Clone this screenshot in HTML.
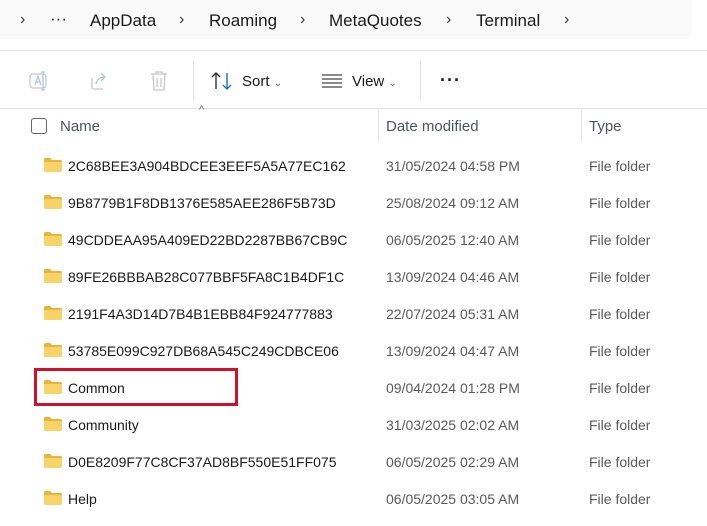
<!DOCTYPE html>
<html><head><style>
body{margin:0;width:707px;height:526px;overflow:hidden;background:#fff;font-family:"Liberation Sans",sans-serif;position:relative}
.abs{position:absolute}
.addr{left:0;top:0;width:691px;height:39px;background:#f9f9f9;border-radius:0 0 6px 0}
.bc{top:11px;font-size:17px;color:#1a1a1a}
.chev{top:11px;font-size:16px;color:#333}
.tb{top:73px;font-size:15px;color:#1a1a1a}
.hdr{top:118px;font-size:15px;color:#4a5666}
.row{position:absolute;left:0;width:707px;height:37px;font-size:14px;color:#1a1a1a}
.row span{position:absolute;top:12px}
.folder{position:absolute;left:44px;top:12px;width:18px;height:14px}
</style></head><body>
<div class="abs addr"></div>
<div class="abs" style="left:0;top:50px;width:707px;height:1px;background:#e3e3e3"></div>
<div class="abs chev" style="left:20px">›</div>
<div class="abs bc" style="left:50px;top:9px">···</div>
<div class="abs bc" style="left:90px">AppData</div>
<div class="abs chev" style="left:179px">›</div>
<div class="abs bc" style="left:209px">Roaming</div>
<div class="abs chev" style="left:300px">›</div>
<div class="abs bc" style="left:329px">MetaQuotes</div>
<div class="abs chev" style="left:446px">›</div>
<div class="abs bc" style="left:476px">Terminal</div>
<div class="abs chev" style="left:564px">›</div>
<svg class="abs" style="left:28px;top:70px" width="22" height="22" viewBox="0 0 22 22" fill="none" stroke="#a8c8e8" stroke-width="1.3"><rect x="2" y="4" width="16" height="14" rx="3" stroke="#c8c8c8"/><path d="M7 15l3-9 3 9M8 12h4"/><path d="M15 2v18M13 2h4M13 20h4"/></svg>
<svg class="abs" style="left:88px;top:70px" width="22" height="22" viewBox="0 0 22 22" fill="none" stroke-width="1.3"><path d="M4 8v9a2 2 0 002 2h9" stroke="#c8c8c8"/><path d="M8 14c1-5 4-7 9-7M13 3l4 4-4 4" stroke="#a8c8e8"/></svg>
<svg class="abs" style="left:148px;top:69px" width="22" height="24" viewBox="0 0 22 24" fill="none" stroke="#c8c8c8" stroke-width="1.3"><path d="M3 5h16M8 5V3h6v2M5 5l1 16h10l1-16M9 9v9M13 9v9"/></svg>
<div class="abs" style="left:193px;top:61px;width:1px;height:39px;background:#e3e3e3"></div>
<svg class="abs" style="left:210px;top:71px" width="24" height="20" viewBox="0 0 24 20" fill="none" stroke-width="1.4"><path d="M6 18V2M2 6l4-4 4 4" stroke="#333"/><path d="M17 2v16M13 14l4 4 4-4" stroke="#1a6fc4"/></svg>
<div class="abs tb" style="left:242px">Sort <span style="font-size:10px;color:#666">⌄</span></div>
<svg class="abs" style="left:321px;top:73px" width="22" height="16" viewBox="0 0 22 16" stroke="#444" stroke-width="1.2"><path d="M1 2h20M1 6h20M1 10h20M1 14h20"/></svg>
<div class="abs tb" style="left:352px">View <span style="font-size:10px;color:#666">⌄</span></div>
<div class="abs" style="left:420px;top:61px;width:1px;height:39px;background:#e3e3e3"></div>
<div class="abs tb" style="left:440px;top:70px;font-size:18px;font-weight:bold;letter-spacing:1px">···</div>
<div class="abs" style="left:0;top:108px;width:707px;height:1px;background:#e3e3e3"></div>
<div class="abs" style="left:199px;top:104px;font-size:11px;color:#666">^</div>
<div class="abs" style="left:31px;top:118px;width:14px;height:14px;border:1px solid #666;border-radius:3px"></div>
<div class="abs hdr" style="left:60px">Name</div>
<div class="abs" style="left:378px;top:108px;width:1px;height:33px;background:#e8e8e8"></div>
<div class="abs hdr" style="left:386px">Date modified</div>
<div class="abs" style="left:581px;top:108px;width:1px;height:33px;background:#e8e8e8"></div>
<div class="abs hdr" style="left:589px">Type</div>

<div class="row" style="top:146px"><svg class="folder" viewBox="0 0 18 14"><path d="M0 1.5Q0 0 1.5 0H6l2 2h8.5Q18 2 18 3.5V4H0z" fill="#e8b53a"/><path d="M0 4h18v8.5Q18 14 16.5 14h-15Q0 14 0 12.5z" fill="#f8d468"/></svg><span style="left:68px">2C68BEE3A904BDCEE3EEF5A5A77EC162</span><span style="left:386px;color:#5a5a5a">31/05/2024 04:58 PM</span><span style="left:589px;color:#5a5a5a">File folder</span></div>
<div class="row" style="top:183px"><svg class="folder" viewBox="0 0 18 14"><path d="M0 1.5Q0 0 1.5 0H6l2 2h8.5Q18 2 18 3.5V4H0z" fill="#e8b53a"/><path d="M0 4h18v8.5Q18 14 16.5 14h-15Q0 14 0 12.5z" fill="#f8d468"/></svg><span style="left:68px">9B8779B1F8DB1376E585AEE286F5B73D</span><span style="left:386px;color:#5a5a5a">25/08/2024 09:12 AM</span><span style="left:589px;color:#5a5a5a">File folder</span></div>
<div class="row" style="top:220px"><svg class="folder" viewBox="0 0 18 14"><path d="M0 1.5Q0 0 1.5 0H6l2 2h8.5Q18 2 18 3.5V4H0z" fill="#e8b53a"/><path d="M0 4h18v8.5Q18 14 16.5 14h-15Q0 14 0 12.5z" fill="#f8d468"/></svg><span style="left:68px">49CDDEAA95A409ED22BD2287BB67CB9C</span><span style="left:386px;color:#5a5a5a">06/05/2025 12:40 AM</span><span style="left:589px;color:#5a5a5a">File folder</span></div>
<div class="row" style="top:257px"><svg class="folder" viewBox="0 0 18 14"><path d="M0 1.5Q0 0 1.5 0H6l2 2h8.5Q18 2 18 3.5V4H0z" fill="#e8b53a"/><path d="M0 4h18v8.5Q18 14 16.5 14h-15Q0 14 0 12.5z" fill="#f8d468"/></svg><span style="left:68px">89FE26BBBAB28C077BBF5FA8C1B4DF1C</span><span style="left:386px;color:#5a5a5a">13/09/2024 04:46 AM</span><span style="left:589px;color:#5a5a5a">File folder</span></div>
<div class="row" style="top:294px"><svg class="folder" viewBox="0 0 18 14"><path d="M0 1.5Q0 0 1.5 0H6l2 2h8.5Q18 2 18 3.5V4H0z" fill="#e8b53a"/><path d="M0 4h18v8.5Q18 14 16.5 14h-15Q0 14 0 12.5z" fill="#f8d468"/></svg><span style="left:68px">2191F4A3D14D7B4B1EBB84F924777883</span><span style="left:386px;color:#5a5a5a">22/07/2024 05:31 AM</span><span style="left:589px;color:#5a5a5a">File folder</span></div>
<div class="row" style="top:331px"><svg class="folder" viewBox="0 0 18 14"><path d="M0 1.5Q0 0 1.5 0H6l2 2h8.5Q18 2 18 3.5V4H0z" fill="#e8b53a"/><path d="M0 4h18v8.5Q18 14 16.5 14h-15Q0 14 0 12.5z" fill="#f8d468"/></svg><span style="left:68px">53785E099C927DB68A545C249CDBCE06</span><span style="left:386px;color:#5a5a5a">13/09/2024 04:47 AM</span><span style="left:589px;color:#5a5a5a">File folder</span></div>
<div class="row" style="top:368px"><svg class="folder" viewBox="0 0 18 14"><path d="M0 1.5Q0 0 1.5 0H6l2 2h8.5Q18 2 18 3.5V4H0z" fill="#e8b53a"/><path d="M0 4h18v8.5Q18 14 16.5 14h-15Q0 14 0 12.5z" fill="#f8d468"/></svg><span style="left:68px">Common</span><span style="left:386px;color:#5a5a5a">09/04/2024 01:28 PM</span><span style="left:589px;color:#5a5a5a">File folder</span></div>
<div class="row" style="top:405px"><svg class="folder" viewBox="0 0 18 14"><path d="M0 1.5Q0 0 1.5 0H6l2 2h8.5Q18 2 18 3.5V4H0z" fill="#e8b53a"/><path d="M0 4h18v8.5Q18 14 16.5 14h-15Q0 14 0 12.5z" fill="#f8d468"/></svg><span style="left:68px">Community</span><span style="left:386px;color:#5a5a5a">31/03/2025 02:02 AM</span><span style="left:589px;color:#5a5a5a">File folder</span></div>
<div class="row" style="top:442px"><svg class="folder" viewBox="0 0 18 14"><path d="M0 1.5Q0 0 1.5 0H6l2 2h8.5Q18 2 18 3.5V4H0z" fill="#e8b53a"/><path d="M0 4h18v8.5Q18 14 16.5 14h-15Q0 14 0 12.5z" fill="#f8d468"/></svg><span style="left:68px">D0E8209F77C8CF37AD8BF550E51FF075</span><span style="left:386px;color:#5a5a5a">06/05/2025 02:29 AM</span><span style="left:589px;color:#5a5a5a">File folder</span></div>
<div class="row" style="top:479px"><svg class="folder" viewBox="0 0 18 14"><path d="M0 1.5Q0 0 1.5 0H6l2 2h8.5Q18 2 18 3.5V4H0z" fill="#e8b53a"/><path d="M0 4h18v8.5Q18 14 16.5 14h-15Q0 14 0 12.5z" fill="#f8d468"/></svg><span style="left:68px">Help</span><span style="left:386px;color:#5a5a5a">06/05/2025 03:05 AM</span><span style="left:589px;color:#5a5a5a">File folder</span></div>

<div class="abs" style="left:34px;top:368px;width:198px;height:32px;border:3px solid #d0112b"></div>
</body></html>
